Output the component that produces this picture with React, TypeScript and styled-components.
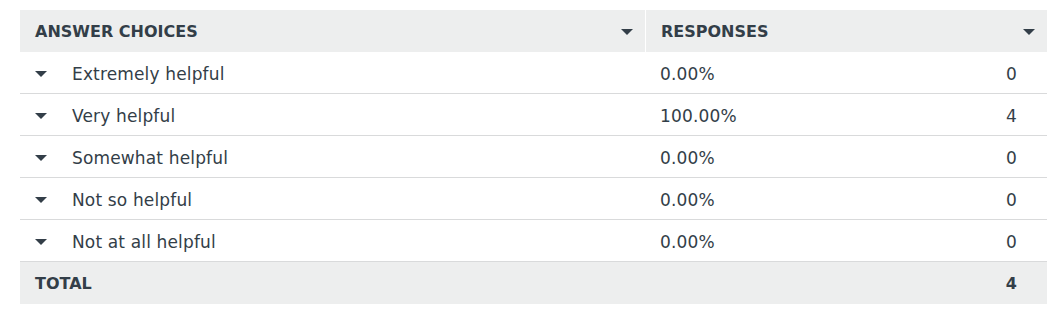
import React from "react";
import styled, { createGlobalStyle } from "styled-components";

const GlobalStyle = createGlobalStyle`
  body {
    margin: 0;
    background: #ffffff;
    font-family: "DejaVu Sans", "Noto Sans", Arial, sans-serif;
    color: #333e48;
  }
`;

const rows = [
  { label: "Extremely helpful", pct: "0.00%", count: 0 },
  { label: "Very helpful", pct: "100.00%", count: 4 },
  { label: "Somewhat helpful", pct: "0.00%", count: 0 },
  { label: "Not so helpful", pct: "0.00%", count: 0 },
  { label: "Not at all helpful", pct: "0.00%", count: 0 },
];

const Page = styled.div`
  padding: 10px 17px 0 20px;
`;

const Table = styled.div`
  display: flex;
  flex-direction: column;
  width: 1027px;
`;

const Row = styled.div<{ $shaded?: boolean; $line?: boolean }>`
  display: grid;
  grid-template-columns: 625px 1fr auto;
  height: 42px;
  box-sizing: border-box;
  background: ${(p) => (p.$shaded ? "#edeeee" : "#ffffff")};
  border-bottom: ${(p) => (p.$line ? "1px solid #d9dadb" : "none")};
`;

const HeadRow = styled(Row)`
  grid-template-columns: 625px 1fr;
`;

const Cell = styled.div<{ $bold?: boolean; $divider?: boolean }>`
  display: flex;
  align-items: center;
  padding: ${(p) => (p.$bold ? "1px" : "3px")} 15px 0;
  font-size: ${(p) => (p.$bold ? "16px" : "17px")};
  letter-spacing: ${(p) => (p.$bold ? "0" : "0.15px")};
  font-weight: ${(p) => (p.$bold ? 700 : 400)};
  border-left: ${(p) => (p.$divider ? "1px solid #ffffff" : "none")};
  white-space: nowrap;
`;

const HeadCell = styled(Cell)`
  justify-content: space-between;
  text-transform: uppercase;
  padding-right: 12px;
`;

const Count = styled(Cell)`
  justify-content: flex-end;
  padding-left: 0;
  padding-right: 30px;
`;

const Caret = styled.span<{ $gap?: number }>`
  display: inline-block;
  width: 0;
  height: 0;
  border-left: 6px solid transparent;
  border-right: 6px solid transparent;
  border-top: 6px solid #333e48;
  margin-right: ${(p) => p.$gap ?? 0}px;
`;

export default function App() {
  return (
    <Page>
      <GlobalStyle />
      <Table>
        <HeadRow $shaded>
          <HeadCell $bold>
            Answer Choices
            <Caret />
          </HeadCell>
          <HeadCell $bold $divider>
            Responses
            <Caret />
          </HeadCell>
        </HeadRow>
        {rows.map((r) => (
          <Row key={r.label} $line>
            <Cell>
              <Caret $gap={25} />
              {r.label}
            </Cell>
            <Cell>{r.pct}</Cell>
            <Count>{r.count}</Count>
          </Row>
        ))}
        <Row $shaded>
          <Cell $bold>TOTAL</Cell>
          <Cell />
          <Count $bold>4</Count>
        </Row>
      </Table>
    </Page>
  );
}
